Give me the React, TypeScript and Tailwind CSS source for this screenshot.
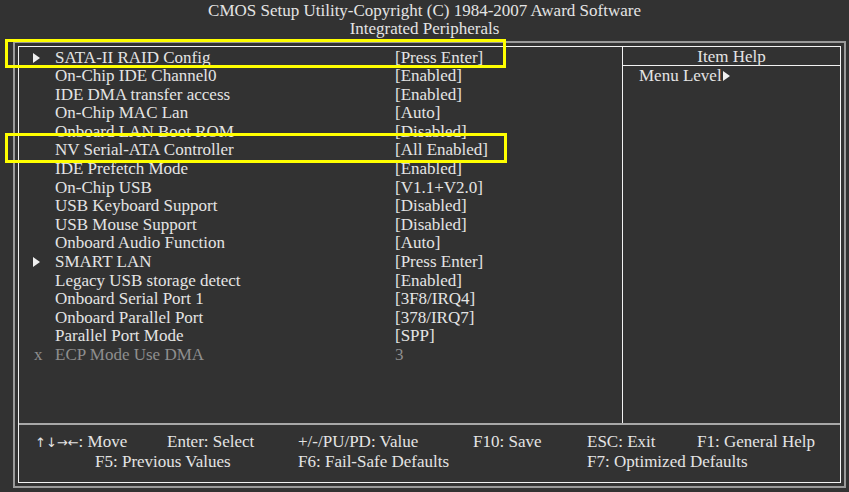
import React from 'react';

type Item = {
  label: string;
  value: string;
  sub?: boolean;
  disabled?: boolean;
};

const items: Item[] = [
  { label: 'SATA-II RAID Config', value: '[Press Enter]', sub: true },
  { label: 'On-Chip IDE Channel0', value: '[Enabled]' },
  { label: 'IDE DMA transfer access', value: '[Enabled]' },
  { label: 'On-Chip MAC Lan', value: '[Auto]' },
  { label: 'Onboard LAN Boot ROM', value: '[Disabled]' },
  { label: 'NV Serial-ATA Controller', value: '[All Enabled]' },
  { label: 'IDE Prefetch Mode', value: '[Enabled]' },
  { label: 'On-Chip USB', value: '[V1.1+V2.0]' },
  { label: 'USB Keyboard Support', value: '[Disabled]' },
  { label: 'USB Mouse Support', value: '[Disabled]' },
  { label: 'Onboard Audio Function', value: '[Auto]' },
  { label: 'SMART LAN', value: '[Press Enter]', sub: true },
  { label: 'Legacy USB storage detect', value: '[Enabled]' },
  { label: 'Onboard Serial Port 1', value: '[3F8/IRQ4]' },
  { label: 'Onboard Parallel Port', value: '[378/IRQ7]' },
  { label: 'Parallel Port Mode', value: '[SPP]' },
  { label: 'ECP Mode Use DMA', value: '3', disabled: true },
];

function Tri({ className }: { className?: string }) {
  return (
    <svg width="7" height="10" viewBox="0 0 7 10" className={className}>
      <path d="M0 0 L7 5 L0 10 Z" fill="#f0f0f0" />
    </svg>
  );
}

export default function App() {
  return (
    <div
      className="relative w-[849px] h-[492px] bg-[#323232] text-[#e4e4e4] text-[17px] overflow-hidden"
      style={{ fontFamily: '"Liberation Serif", "Times New Roman", serif' }}
    >
      {/* Title */}
      <div className="pt-[2px] text-center leading-[18px]">
        <div>CMOS Setup Utility-Copyright (C) 1984-2007 Award Software</div>
        <div>Integrated Peripherals</div>
      </div>

      {/* Outer frame */}
      <div className="mt-[3px] ml-[13px] w-[833px] h-[447px] border-2 border-[#9a9a9a] p-[3px]">
        <div className="h-full border border-[#f2f2f2] flex flex-col">
          <div className="flex flex-1">
            {/* Settings list */}
            <div className="w-[604px] border-r border-[#f2f2f2] pt-[1.5px]">
              {items.map((it) => (
                <div
                  key={it.label}
                  className={`flex items-center leading-[18.6px] ${
                    it.disabled ? 'text-[#8e8e8e]' : ''
                  }`}
                >
                  <div className="w-[36px] pl-[14px] flex items-center">
                    {it.sub && <Tri />}
                    {it.disabled && <span className="pl-[1px]">x</span>}
                  </div>
                  <div className="w-[340px]">{it.label}</div>
                  <div>{it.value}</div>
                </div>
              ))}
            </div>

            {/* Item help */}
            <div className="flex-1">
              <div className="text-center leading-[17px] pt-[1px] border-b border-[#f2f2f2]">Item Help</div>
              <div className="pl-[16px] pt-[1px] leading-[18.6px] flex items-center">
                Menu Level
                <Tri className="ml-[1px]" />
              </div>
            </div>
          </div>

          {/* Key help */}
          <div className="h-[59px] border-t-2 border-[#a8a8a8] pt-[7px] pl-[16px] grid grid-cols-[132px_131px_175px_114px_110px_1fr] content-start leading-[19px]">
            <div>
              <span
                className="text-[13px]"
                style={{ fontFamily: '"DejaVu Sans", sans-serif' }}
              >
                ↑↓→←
              </span>
              : Move
            </div>
            <div>Enter: Select</div>
            <div>+/-/PU/PD: Value</div>
            <div>F10: Save</div>
            <div>ESC: Exit</div>
            <div>F1: General Help</div>
            <div className="col-span-2 pl-[60px]">F5: Previous Values</div>
            <div className="col-span-2">F6: Fail-Safe Defaults</div>
            <div className="col-span-2 col-start-5">F7: Optimized Defaults</div>
          </div>
        </div>
      </div>

      {/* Highlight boxes */}
      <div className="absolute left-[5px] top-[39px] w-[501px] h-[29px] border-[3px] border-[#ffff00]" />
      <div className="absolute left-[5px] top-[133px] w-[502px] h-[30px] border-[3px] border-[#ffff00]" />
    </div>
  );
}
